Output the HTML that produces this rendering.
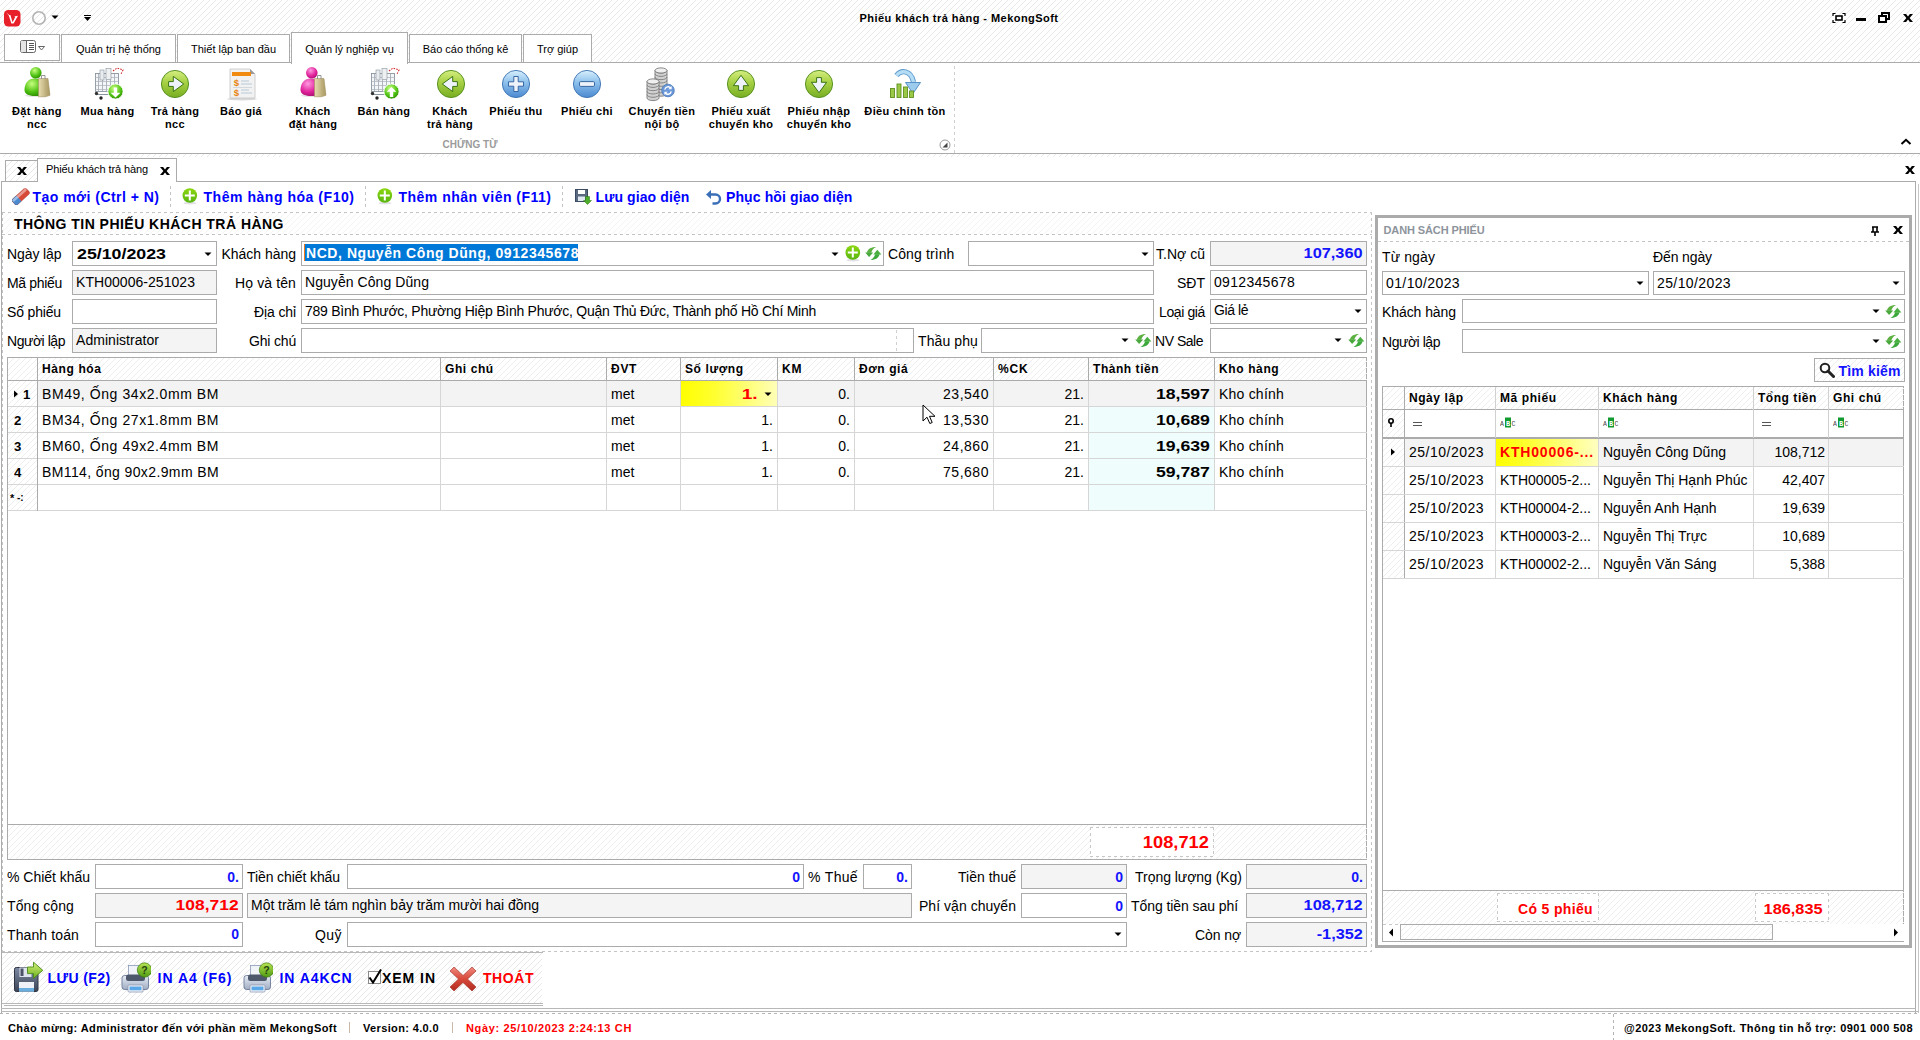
<!DOCTYPE html>
<html><head><meta charset="utf-8"><title>Phiếu khách trả hàng - MekongSoft</title>
<style>
html,body{margin:0;padding:0;width:1920px;height:1040px;overflow:hidden;background:#fff;font-family:"Liberation Sans",sans-serif}
body>div,body>svg{position:absolute}
</style></head><body>
<svg width="0" height="0" style="position:absolute"><defs>
<pattern id="hp" width="6" height="6" patternUnits="userSpaceOnUse"><rect x="5" y="0" width="1" height="1" fill="#e8e8e8"/><rect x="4" y="1" width="1" height="1" fill="#e8e8e8"/><rect x="3" y="2" width="1" height="1" fill="#e8e8e8"/><rect x="2" y="3" width="1" height="1" fill="#e8e8e8"/><rect x="1" y="4" width="1" height="1" fill="#e8e8e8"/><rect x="0" y="5" width="1" height="1" fill="#e8e8e8"/></pattern>
<pattern id="hp2" width="6" height="6" patternUnits="userSpaceOnUse"><rect x="5" y="0" width="1" height="1" fill="#eeeeee"/><rect x="4" y="1" width="1" height="1" fill="#eeeeee"/><rect x="3" y="2" width="1" height="1" fill="#eeeeee"/><rect x="2" y="3" width="1" height="1" fill="#eeeeee"/><rect x="1" y="4" width="1" height="1" fill="#eeeeee"/><rect x="0" y="5" width="1" height="1" fill="#eeeeee"/></pattern>
<pattern id="hp3" width="6" height="6" patternUnits="userSpaceOnUse"><rect x="5" y="0" width="1" height="1" fill="#f4f4f4"/><rect x="4" y="1" width="1" height="1" fill="#f4f4f4"/><rect x="3" y="2" width="1" height="1" fill="#f4f4f4"/><rect x="2" y="3" width="1" height="1" fill="#f4f4f4"/><rect x="1" y="4" width="1" height="1" fill="#f4f4f4"/><rect x="0" y="5" width="1" height="1" fill="#f4f4f4"/></pattern>
</defs></svg>
<svg style="left:0px;top:0px" width="1920" height="62"><rect width="1920" height="62" fill="url(#hp)"/></svg>
<svg style="left:4px;top:10px;" width="17" height="17" viewBox="0 0 17 17"><rect x="0" y="0" width="16.5" height="16.5" rx="4.2" fill="#e8202a"/><path d="M2.4 2.6L5.2 5.1L6.4 5L8.6 12.2L11.2 6.9L10.1 6.6L14 5.7L9.6 13.6H7.4L4.8 5.6Z" fill="#fff"/></svg>
<svg style="left:31px;top:10px;" width="16" height="16" viewBox="0 0 16 16"><circle cx="8" cy="8" r="6.2" fill="none" stroke="#b4b4b4" stroke-width="1.6"/></svg>
<svg style="left:51px;top:15px;" width="8" height="5" viewBox="0 0 8 5"><path d="M0.5 0.5h7l-3.5 3.5z" fill="#000"/></svg>
<svg style="left:83px;top:14px;" width="9" height="8" viewBox="0 0 9 8"><rect x="1" y="1" width="7" height="1" fill="#000"/><path d="M1 3h7l-3.5 4z" fill="#000"/></svg>
<div style="top:13px;font-size:11px;line-height:11px;font-weight:700;color:#000;white-space:nowrap;left:559px;width:800px;text-align:center;letter-spacing:0.455px;">Phiếu khách trả hàng - MekongSoft</div>
<svg style="left:1832px;top:12px;" width="14" height="12" viewBox="0 0 14 12"><path d="M1 4V1.5h2.5M10.5 1.5H13V4M13 8v2.5h-2.5M3.5 10.5H1V8" fill="none" stroke="#000" stroke-width="1.2"/><rect x="4" y="4" width="6" height="4" fill="none" stroke="#000" stroke-width="1.6"/></svg>
<div style="left:1856px;top:18px;width:10px;height:3px;background:#000"></div>
<svg style="left:1878px;top:12px;" width="12" height="11" viewBox="0 0 12 11"><rect x="4" y="1" width="7" height="6" fill="none" stroke="#000" stroke-width="2"/><rect x="1" y="4" width="7" height="6" fill="#fff" stroke="#000" stroke-width="2"/></svg>
<svg style="left:1903px;top:14px;" width="10" height="8" viewBox="0 0 10 8"><path d="M0 0H3.1L5 2.5L6.9 0H10L6.6 3.9L10 8H6.9L5 5.4L3.1 8H0L3.4 3.9Z" fill="#000"/></svg>
<div style="left:4px;top:34px;width:54px;height:25px;border:1px solid #ababab;background:#fff"></div>
<svg style="left:20px;top:40px;" width="26" height="14" viewBox="0 0 26 14"><rect x="0.5" y="0.5" width="15" height="12" rx="2" fill="#fff" stroke="#666"/><rect x="1" y="1" width="5" height="11" fill="#e4e4e4"/><path d="M6.5 0.5v12" stroke="#666"/><path d="M9 3.5h5M9 5.5h5M9 7.5h5M9 9.5h5" stroke="#555"/><path d="M18.5 6.5h6l-3 3.5z" fill="none" stroke="#666"/></svg>
<div style="left:0px;top:62px;width:1920px;height:1px;background:#ababab"></div>
<div style="left:61px;top:34px;width:113px;height:27px;border:1px solid #ababab;background:#fff"></div>
<div style="top:44px;font-size:11px;line-height:11px;font-weight:400;color:#000;white-space:nowrap;left:-281.5px;width:800px;text-align:center;">Quản trị hệ thống</div>
<div style="left:177px;top:34px;width:111px;height:27px;border:1px solid #ababab;background:#fff"></div>
<div style="top:44px;font-size:11px;line-height:11px;font-weight:400;color:#000;white-space:nowrap;left:-166.5px;width:800px;text-align:center;">Thiết lập ban đầu</div>
<div style="left:409px;top:34px;width:111px;height:27px;border:1px solid #ababab;background:#fff"></div>
<div style="top:44px;font-size:11px;line-height:11px;font-weight:400;color:#000;white-space:nowrap;left:65.5px;width:800px;text-align:center;">Báo cáo thống kê</div>
<div style="left:523px;top:34px;width:67px;height:27px;border:1px solid #ababab;background:#fff"></div>
<div style="top:44px;font-size:11px;line-height:11px;font-weight:400;color:#000;white-space:nowrap;left:157.5px;width:800px;text-align:center;">Trợ giúp</div>
<div style="left:291px;top:32px;width:115px;height:31px;border:1px solid #ababab;border-bottom:none;background:#fff"></div>
<div style="top:44px;font-size:11px;line-height:11px;font-weight:400;color:#000;white-space:nowrap;left:-50.5px;width:800px;text-align:center;">Quản lý nghiệp vụ</div>
<div style="left:0px;top:153px;width:1920px;height:1px;background:#ababab"></div>
<div style="top:106px;font-size:11px;line-height:11px;font-weight:700;color:#000;white-space:nowrap;left:-363px;width:800px;text-align:center;letter-spacing:0.35px;">Đặt hàng</div>
<div style="top:119px;font-size:11px;line-height:11px;font-weight:700;color:#000;white-space:nowrap;left:-363px;width:800px;text-align:center;letter-spacing:0.35px;">ncc</div>
<div style="top:106px;font-size:11px;line-height:11px;font-weight:700;color:#000;white-space:nowrap;left:-292.5px;width:800px;text-align:center;letter-spacing:0.35px;">Mua hàng</div>
<div style="top:106px;font-size:11px;line-height:11px;font-weight:700;color:#000;white-space:nowrap;left:-225px;width:800px;text-align:center;letter-spacing:0.35px;">Trả hàng</div>
<div style="top:119px;font-size:11px;line-height:11px;font-weight:700;color:#000;white-space:nowrap;left:-225px;width:800px;text-align:center;letter-spacing:0.35px;">ncc</div>
<div style="top:106px;font-size:11px;line-height:11px;font-weight:700;color:#000;white-space:nowrap;left:-159px;width:800px;text-align:center;letter-spacing:0.35px;">Báo giá</div>
<div style="top:106px;font-size:11px;line-height:11px;font-weight:700;color:#000;white-space:nowrap;left:-87px;width:800px;text-align:center;letter-spacing:0.35px;">Khách</div>
<div style="top:119px;font-size:11px;line-height:11px;font-weight:700;color:#000;white-space:nowrap;left:-87px;width:800px;text-align:center;letter-spacing:0.35px;">đặt hàng</div>
<div style="top:106px;font-size:11px;line-height:11px;font-weight:700;color:#000;white-space:nowrap;left:-16px;width:800px;text-align:center;letter-spacing:0.35px;">Bán hàng</div>
<div style="top:106px;font-size:11px;line-height:11px;font-weight:700;color:#000;white-space:nowrap;left:50px;width:800px;text-align:center;letter-spacing:0.35px;">Khách</div>
<div style="top:119px;font-size:11px;line-height:11px;font-weight:700;color:#000;white-space:nowrap;left:50px;width:800px;text-align:center;letter-spacing:0.35px;">trả hàng</div>
<div style="top:106px;font-size:11px;line-height:11px;font-weight:700;color:#000;white-space:nowrap;left:116px;width:800px;text-align:center;letter-spacing:0.35px;">Phiếu thu</div>
<div style="top:106px;font-size:11px;line-height:11px;font-weight:700;color:#000;white-space:nowrap;left:187px;width:800px;text-align:center;letter-spacing:0.35px;">Phiếu chi</div>
<div style="top:106px;font-size:11px;line-height:11px;font-weight:700;color:#000;white-space:nowrap;left:262px;width:800px;text-align:center;letter-spacing:0.35px;">Chuyển tiền</div>
<div style="top:119px;font-size:11px;line-height:11px;font-weight:700;color:#000;white-space:nowrap;left:262px;width:800px;text-align:center;letter-spacing:0.35px;">nội bộ</div>
<div style="top:106px;font-size:11px;line-height:11px;font-weight:700;color:#000;white-space:nowrap;left:341px;width:800px;text-align:center;letter-spacing:0.35px;">Phiếu xuất</div>
<div style="top:119px;font-size:11px;line-height:11px;font-weight:700;color:#000;white-space:nowrap;left:341px;width:800px;text-align:center;letter-spacing:0.35px;">chuyển kho</div>
<div style="top:106px;font-size:11px;line-height:11px;font-weight:700;color:#000;white-space:nowrap;left:419px;width:800px;text-align:center;letter-spacing:0.35px;">Phiếu nhập</div>
<div style="top:119px;font-size:11px;line-height:11px;font-weight:700;color:#000;white-space:nowrap;left:419px;width:800px;text-align:center;letter-spacing:0.35px;">chuyển kho</div>
<div style="top:106px;font-size:11px;line-height:11px;font-weight:700;color:#000;white-space:nowrap;left:505px;width:800px;text-align:center;letter-spacing:0.35px;">Điều chỉnh tồn</div>
<div style="top:140px;font-size:10px;line-height:10px;font-weight:700;color:#9b9b9b;white-space:nowrap;left:70px;width:800px;text-align:center;">CHỨNG TỪ</div>
<div style="left:954px;top:66px;width:1px;height:87px;background:repeating-linear-gradient(180deg,#cfcfcf 0 3px,transparent 3px 6px)"></div>
<svg style="left:939px;top:139px;" width="12" height="12" viewBox="0 0 12 12"><circle cx="6" cy="6" r="5" fill="#fff" stroke="#9a9a9a"/><path d="M3.5 8.5h5v-5z" fill="#444"/></svg>
<svg style="left:1900px;top:138px;" width="12" height="8" viewBox="0 0 12 8"><path d="M1.5 6L6 1.8L10.5 6" fill="none" stroke="#000" stroke-width="2"/></svg>
<svg style="left:0;top:0;width:0;height:0"><defs>
<linearGradient id="gG" x1="0" y1="0" x2="0" y2="1"><stop offset="0" stop-color="#d4ee80"/><stop offset="0.45" stop-color="#a6d044"/><stop offset="1" stop-color="#78ae22"/></linearGradient>
<linearGradient id="gB" x1="0" y1="0" x2="0" y2="1"><stop offset="0" stop-color="#d8f0fc"/><stop offset="0.45" stop-color="#8cc0ec"/><stop offset="1" stop-color="#4a88d0"/></linearGradient>
<radialGradient id="gP" cx="0.4" cy="0.3" r="0.8"><stop offset="0" stop-color="#ff9ae0"/><stop offset="0.6" stop-color="#e0209a"/><stop offset="1" stop-color="#a0106a"/></radialGradient>
<radialGradient id="gL" cx="0.4" cy="0.3" r="0.8"><stop offset="0" stop-color="#c8ff80"/><stop offset="0.6" stop-color="#4cc010"/><stop offset="1" stop-color="#2a8000"/></radialGradient>
<linearGradient id="gBag" x1="0" y1="0" x2="1" y2="0"><stop offset="0" stop-color="#e8dcb0"/><stop offset="1" stop-color="#a89860"/></linearGradient>
</defs></svg>
<svg style="left:22px;top:66px;" width="30" height="32" viewBox="0 0 30 32"><ellipse cx="14" cy="29.5" rx="11" ry="1.6" fill="#000" opacity="0.10"/><path d="M2.5 24c0-7 4-11.5 10-11.5s8.5 3 8.5 9v7.5c-2 0.6-5 1-8.5 1c-6 0-10-2.2-10-6z" fill="url(#gL)"/><circle cx="13.8" cy="6.8" r="5.8" fill="url(#gL)"/><path d="M16.5 12.5h9.5l2 16.8l-4.5 1.5h-7z" fill="url(#gBag)" stroke="#9a8a58" stroke-width="0.5"/><path d="M24 12.5v16.5" stroke="#b8a878" stroke-width="0.6"/><path d="M19.5 13v-3.5h3.5v3.5" fill="none" stroke="#8a8a8a" stroke-width="0.9"/></svg>
<svg style="left:94px;top:67px;" width="30" height="33" viewBox="0 0 30 33"><rect x="1.5" y="6.5" width="23" height="18" fill="#f4f6f8" stroke="#8a949e" stroke-width="0.9"/><path d="M4.5 7v17" stroke="#9aa4ae" stroke-width="0.8"/><path d="M8.5 7v17" stroke="#9aa4ae" stroke-width="0.8"/><path d="M12.5 7v17" stroke="#9aa4ae" stroke-width="0.8"/><path d="M16.5 7v17" stroke="#9aa4ae" stroke-width="0.8"/><path d="M20.5 7v17" stroke="#9aa4ae" stroke-width="0.8"/><path d="M1.5 10.5h23" stroke="#aab2ba" stroke-width="0.7"/><path d="M1.5 14.5h23" stroke="#aab2ba" stroke-width="0.7"/><path d="M1.5 18.5h23" stroke="#aab2ba" stroke-width="0.7"/><path d="M1.5 22.5h23" stroke="#aab2ba" stroke-width="0.7"/><rect x="6" y="3" width="4" height="10" fill="#e8ecef" stroke="#8a949e" stroke-width="0.6"/><rect x="12" y="1.5" width="5" height="11" fill="#eef0f2" stroke="#8a949e" stroke-width="0.6"/><path d="M19 4l4-3l6 2l-2 4" fill="none" stroke="#d02828" stroke-width="1.1" stroke-dasharray="1.6 1.2"/><path d="M2 27.5h16" stroke="#8a949e" stroke-width="1"/><circle cx="2.5" cy="26.5" r="1.7" fill="#333"/><circle cx="7" cy="31" r="1.7" fill="#222"/><circle cx="21.5" cy="24.5" r="7.6" fill="url(#gL)" stroke="#fff" stroke-width="0.9"/><path d="M19.8 20.5v5.2h-3.2l4.9 4.8l4.9-4.8h-3.2v-5.2z" fill="#fff"/></svg>
<svg style="left:160px;top:69px;" width="30" height="30" viewBox="0 0 30 30"><circle cx="15" cy="15" r="13.6" fill="url(#gG)" stroke="#4e8a1a" stroke-width="0.9"/><path transform="rotate(0 15 15)" d="M8.6 12.6H13.3V7.4L23.7 15L13.3 22.6V17.4H8.6Z" fill="#eef2fa" stroke="#3a7412" stroke-width="1" stroke-linejoin="miter"/></svg>
<svg style="left:226px;top:67px;" width="33" height="34" viewBox="0 0 33 34"><ellipse cx="16" cy="32" rx="15" ry="1.4" fill="#000" opacity="0.15"/><path d="M4 2h20l5 5v24h-25z" fill="#f2f2f2" stroke="#c4c4c4" stroke-width="0.8"/><path d="M24 2v5h5z" fill="#9a9a9a"/><rect x="6" y="5" width="19" height="4" fill="#f08a10"/><text x="10.5" y="19" font-size="9.5" font-weight="700" font-family="Liberation Sans" text-anchor="middle" fill="#e8820e">$</text><text x="10.5" y="28.5" font-size="9.5" font-weight="700" font-family="Liberation Sans" text-anchor="middle" fill="#e8820e">$</text><path d="M15 14h8M15 17h11M15 23h8M15 26h11" stroke="#b8c8d8" stroke-width="1.2"/><path d="M7 20.5h19" stroke="#c8d0d8" stroke-width="0.8"/></svg>
<svg style="left:298px;top:66px;" width="30" height="32" viewBox="0 0 30 32"><ellipse cx="14" cy="29.5" rx="11" ry="1.6" fill="#000" opacity="0.10"/><path d="M2.5 24c0-7 4-11.5 10-11.5s8.5 3 8.5 9v7.5c-2 0.6-5 1-8.5 1c-6 0-10-2.2-10-6z" fill="url(#gP)"/><circle cx="13.8" cy="6.8" r="5.8" fill="url(#gP)"/><path d="M16.5 12.5h9.5l2 16.8l-4.5 1.5h-7z" fill="url(#gBag)" stroke="#9a8a58" stroke-width="0.5"/><path d="M24 12.5v16.5" stroke="#b8a878" stroke-width="0.6"/><path d="M19.5 13v-3.5h3.5v3.5" fill="none" stroke="#8a8a8a" stroke-width="0.9"/></svg>
<svg style="left:370px;top:67px;" width="30" height="33" viewBox="0 0 30 33"><rect x="1.5" y="6.5" width="23" height="18" fill="#f4f6f8" stroke="#8a949e" stroke-width="0.9"/><path d="M4.5 7v17" stroke="#9aa4ae" stroke-width="0.8"/><path d="M8.5 7v17" stroke="#9aa4ae" stroke-width="0.8"/><path d="M12.5 7v17" stroke="#9aa4ae" stroke-width="0.8"/><path d="M16.5 7v17" stroke="#9aa4ae" stroke-width="0.8"/><path d="M20.5 7v17" stroke="#9aa4ae" stroke-width="0.8"/><path d="M1.5 10.5h23" stroke="#aab2ba" stroke-width="0.7"/><path d="M1.5 14.5h23" stroke="#aab2ba" stroke-width="0.7"/><path d="M1.5 18.5h23" stroke="#aab2ba" stroke-width="0.7"/><path d="M1.5 22.5h23" stroke="#aab2ba" stroke-width="0.7"/><rect x="6" y="3" width="4" height="10" fill="#e8ecef" stroke="#8a949e" stroke-width="0.6"/><rect x="12" y="1.5" width="5" height="11" fill="#eef0f2" stroke="#8a949e" stroke-width="0.6"/><path d="M19 4l4-3l6 2l-2 4" fill="none" stroke="#d02828" stroke-width="1.1" stroke-dasharray="1.6 1.2"/><path d="M2 27.5h16" stroke="#8a949e" stroke-width="1"/><circle cx="2.5" cy="26.5" r="1.7" fill="#333"/><circle cx="7" cy="31" r="1.7" fill="#222"/><circle cx="21.5" cy="24.5" r="7.6" fill="url(#gL)" stroke="#fff" stroke-width="0.9"/><path d="M19.8 30v-5.2h-3.2l4.9-4.8l4.9 4.8h-3.2v5.2z" fill="#fff"/></svg>
<svg style="left:436px;top:69px;" width="30" height="30" viewBox="0 0 30 30"><circle cx="15" cy="15" r="13.6" fill="url(#gG)" stroke="#4e8a1a" stroke-width="0.9"/><path transform="rotate(180 15 15)" d="M8.6 12.6H13.3V7.4L23.7 15L13.3 22.6V17.4H8.6Z" fill="#eef2fa" stroke="#3a7412" stroke-width="1" stroke-linejoin="miter"/></svg>
<svg style="left:501px;top:69px;" width="30" height="30" viewBox="0 0 30 30"><circle cx="15" cy="15" r="13.6" fill="url(#gB)" stroke="#3a70b0" stroke-width="0.9"/><path d="M12.8 7.5h4.4v5.3h5.3v4.4h-5.3v5.3h-4.4v-5.3h-5.3v-4.4h5.3z" fill="#eef2fa" stroke="#2a5a98" stroke-width="0.9"/></svg>
<svg style="left:572px;top:69px;" width="30" height="30" viewBox="0 0 30 30"><circle cx="15" cy="15" r="13.6" fill="url(#gB)" stroke="#3a70b0" stroke-width="0.9"/><rect x="7.5" y="12.6" width="15" height="4.8" rx="1.2" fill="#eef2fa" stroke="#2a5a98" stroke-width="0.9"/></svg>
<svg style="left:645px;top:66px;" width="34" height="36" viewBox="0 0 34 36"><rect x="10" y="4.5" width="12" height="23.099999999999998" fill="#d8d8d8"/><path d="M10 27.599999999999998a6 2.6 0 0 0 12 0" fill="#d0d0d0" stroke="#7a7a7a" stroke-width="0.9"/><path d="M10 24.299999999999997a6 2.6 0 0 0 12 0" fill="#d0d0d0" stroke="#7a7a7a" stroke-width="0.9"/><path d="M10 21.0a6 2.6 0 0 0 12 0" fill="#d0d0d0" stroke="#7a7a7a" stroke-width="0.9"/><path d="M10 17.7a6 2.6 0 0 0 12 0" fill="#d0d0d0" stroke="#7a7a7a" stroke-width="0.9"/><path d="M10 14.399999999999999a6 2.6 0 0 0 12 0" fill="#d0d0d0" stroke="#7a7a7a" stroke-width="0.9"/><path d="M10 11.099999999999998a6 2.6 0 0 0 12 0" fill="#d0d0d0" stroke="#7a7a7a" stroke-width="0.9"/><path d="M10 7.800000000000001a6 2.6 0 0 0 12 0" fill="#d0d0d0" stroke="#7a7a7a" stroke-width="0.9"/><path d="M10 4.5a6 2.6 0 0 0 12 0" fill="#d0d0d0" stroke="#7a7a7a" stroke-width="0.9"/><path d="M10 4.5v23.099999999999998M22 4.5v23.099999999999998" stroke="#7a7a7a" stroke-width="0.9"/><ellipse cx="16" cy="4.5" rx="6" ry="2.6" fill="#efefef" stroke="#7a7a7a" stroke-width="0.9"/><rect x="2" y="15.5" width="12" height="16.5" fill="#d8d8d8"/><path d="M2 32.0a6 2.6 0 0 0 12 0" fill="#d0d0d0" stroke="#7a7a7a" stroke-width="0.9"/><path d="M2 28.7a6 2.6 0 0 0 12 0" fill="#d0d0d0" stroke="#7a7a7a" stroke-width="0.9"/><path d="M2 25.4a6 2.6 0 0 0 12 0" fill="#d0d0d0" stroke="#7a7a7a" stroke-width="0.9"/><path d="M2 22.1a6 2.6 0 0 0 12 0" fill="#d0d0d0" stroke="#7a7a7a" stroke-width="0.9"/><path d="M2 18.8a6 2.6 0 0 0 12 0" fill="#d0d0d0" stroke="#7a7a7a" stroke-width="0.9"/><path d="M2 15.5a6 2.6 0 0 0 12 0" fill="#d0d0d0" stroke="#7a7a7a" stroke-width="0.9"/><path d="M2 15.5v16.5M14 15.5v16.5" stroke="#7a7a7a" stroke-width="0.9"/><ellipse cx="8" cy="15.5" rx="6" ry="2.6" fill="#efefef" stroke="#7a7a7a" stroke-width="0.9"/><circle cx="23" cy="24.5" r="6.3" fill="#6a98d8" stroke="#4a78b8" stroke-width="0.8"/><path d="M19.8 23.6a3.4 3.4 0 0 1 6-1.6M26.2 25.4a3.4 3.4 0 0 1-6 1.6" fill="none" stroke="#fff" stroke-width="1.4"/><path d="M26.6 20v3.2h-3.2z" fill="#fff"/><path d="M19.4 29v-3.2h3.2z" fill="#fff"/></svg>
<svg style="left:726px;top:69px;" width="30" height="30" viewBox="0 0 30 30"><circle cx="15" cy="15" r="13.6" fill="url(#gG)" stroke="#4e8a1a" stroke-width="0.9"/><path transform="rotate(-90 15 15)" d="M8.6 12.6H13.3V7.4L23.7 15L13.3 22.6V17.4H8.6Z" fill="#eef2fa" stroke="#3a7412" stroke-width="1" stroke-linejoin="miter"/></svg>
<svg style="left:804px;top:69px;" width="30" height="30" viewBox="0 0 30 30"><circle cx="15" cy="15" r="13.6" fill="url(#gG)" stroke="#4e8a1a" stroke-width="0.9"/><path transform="rotate(90 15 15)" d="M8.6 12.6H13.3V7.4L23.7 15L13.3 22.6V17.4H8.6Z" fill="#eef2fa" stroke="#3a7412" stroke-width="1" stroke-linejoin="miter"/></svg>
<svg style="left:888px;top:69px;" width="34" height="31" viewBox="0 0 34 31"><path d="M8.5 6.5C13 0.5 23 1 25.5 13" fill="none" stroke="#5a98cc" stroke-width="5.2"/><path d="M8.5 6.5C13 0.5 23 1 25.5 13" fill="none" stroke="#b4dcf4" stroke-width="3.4"/><path d="M17.5 13.5H32.5L25 24.5Z" fill="#9ccbee" stroke="#4a88c0" stroke-width="0.9" stroke-linejoin="round"/><rect x="2.5" y="19.5" width="4" height="9" fill="#9cc848" stroke="#5e9020" stroke-width="0.9"/><rect x="9" y="15" width="4" height="13.5" fill="#9cc848" stroke="#5e9020" stroke-width="0.9"/><rect x="15.5" y="18" width="4" height="10.5" fill="#9cc848" stroke="#5e9020" stroke-width="0.9"/><rect x="21.5" y="22" width="4" height="6.5" fill="#9cc848" stroke="#5e9020" stroke-width="0.9"/></svg>
<svg style="left:0px;top:154px" width="1920" height="3"><rect width="1920" height="3" fill="url(#hp)"/></svg>
<div style="left:5px;top:160px;width:31px;height:20px;border:1px solid #ababab;background:transparent"></div>
<svg style="left:6px;top:161px" width="31" height="20"><rect width="31" height="20" fill="url(#hp)"/></svg>
<svg style="left:17px;top:167px;" width="10" height="8" viewBox="0 0 10 8"><path d="M0 0H3.1L5 2.5L6.9 0H10L6.6 3.9L10 8H6.9L5 5.4L3.1 8H0L3.4 3.9Z" fill="#000"/></svg>
<div style="left:37px;top:158px;width:138px;height:23px;border:1px solid #ababab;border-bottom:none;background:#fff"></div>
<div style="top:164px;font-size:11px;line-height:11px;font-weight:400;color:#000;white-space:nowrap;left:46px;letter-spacing:-0.098px;">Phiếu khách trả hàng</div>
<svg style="left:160px;top:167px;" width="10" height="8" viewBox="0 0 10 8"><path d="M0 0H3.1L5 2.5L6.9 0H10L6.6 3.9L10 8H6.9L5 5.4L3.1 8H0L3.4 3.9Z" fill="#000"/></svg>
<svg style="left:1905px;top:166px;" width="10" height="8" viewBox="0 0 10 8"><path d="M0 0H3.1L5 2.5L6.9 0H10L6.6 3.9L10 8H6.9L5 5.4L3.1 8H0L3.4 3.9Z" fill="#000"/></svg>
<div style="left:1px;top:181px;width:37px;height:1px;background:#ababab"></div>
<div style="left:176px;top:181px;width:1740px;height:1px;background:#ababab"></div>
<div style="left:1px;top:181px;width:1px;height:832px;background:#ababab"></div>
<div style="left:1915px;top:181px;width:1px;height:832px;background:#ababab"></div>
<div style="left:1918px;top:184px;width:1px;height:829px;background:#c8c8c8"></div>
<div style="left:1px;top:1008px;width:1915px;height:1px;background:#b8b8b8"></div>
<div style="left:1px;top:1011px;width:1918px;height:1px;background:#b8b8b8"></div>
<div style="left:0px;top:1013px;width:1920px;height:1px;background:repeating-linear-gradient(90deg,#b4b4b4 0 3px,transparent 3px 6px)"></div>
<div style="top:189.5px;font-size:14px;line-height:14px;font-weight:700;color:#0000ff;white-space:nowrap;left:32.5px;letter-spacing:0.474px;">Tạo mới (Ctrl + N)</div>
<div style="left:170px;top:186px;width:1px;height:23px;background:repeating-linear-gradient(180deg,#c4c4c4 0 3px,transparent 3px 6px)"></div>
<div style="top:189.5px;font-size:14px;line-height:14px;font-weight:700;color:#0000ff;white-space:nowrap;left:203.5px;letter-spacing:0.537px;">Thêm hàng hóa (F10)</div>
<div style="left:365px;top:186px;width:1px;height:23px;background:repeating-linear-gradient(180deg,#c4c4c4 0 3px,transparent 3px 6px)"></div>
<div style="top:189.5px;font-size:14px;line-height:14px;font-weight:700;color:#0000ff;white-space:nowrap;left:398.5px;letter-spacing:0.493px;">Thêm nhân viên (F11)</div>
<div style="left:562px;top:186px;width:1px;height:23px;background:repeating-linear-gradient(180deg,#c4c4c4 0 3px,transparent 3px 6px)"></div>
<div style="top:189.5px;font-size:14px;line-height:14px;font-weight:700;color:#0000ff;white-space:nowrap;left:595.5px;letter-spacing:0.108px;">Lưu giao diện</div>
<div style="top:189.5px;font-size:14px;line-height:14px;font-weight:700;color:#0000ff;white-space:nowrap;left:726px;letter-spacing:0.114px;">Phục hồi giao diện</div>
<svg style="left:3px;top:213px" width="1368" height="21"><rect width="1368" height="21" fill="url(#hp3)"/></svg>
<div style="left:2px;top:212px;width:1370px;height:1px;background:repeating-linear-gradient(90deg,#c4c4c4 0 3px,transparent 3px 6px)"></div>
<div style="left:2px;top:234px;width:1370px;height:1px;background:repeating-linear-gradient(90deg,#c4c4c4 0 3px,transparent 3px 6px)"></div>
<div style="left:1371px;top:212px;width:1px;height:740px;background:repeating-linear-gradient(180deg,#c4c4c4 0 3px,transparent 3px 6px)"></div>
<div style="left:2px;top:212px;width:1px;height:740px;background:repeating-linear-gradient(180deg,#c4c4c4 0 3px,transparent 3px 6px)"></div>
<div style="top:217px;font-size:14px;line-height:14px;font-weight:700;color:#000;white-space:nowrap;left:14px;letter-spacing:0.470px;">THÔNG TIN PHIẾU KHÁCH TRẢ HÀNG</div>
<div style="top:247px;font-size:14px;line-height:14px;font-weight:400;color:#000;white-space:nowrap;left:7px;letter-spacing:-0.096px;">Ngày lập</div>
<div style="left:72px;top:241px;width:143px;height:23px;border:1px solid #ababab;background:#fff"></div>
<div style="top:247px;font-size:14px;line-height:14px;font-weight:700;color:#000;white-space:nowrap;left:76.5px;transform:scaleX(1.2700);transform-origin:left center;">25/10/2023</div>
<svg style="left:204px;top:252px;" width="8" height="5" viewBox="0 0 8 5"><path d="M0.5 0.5h7l-3.5 3.5z" fill="#000"/></svg>
<div style="top:247px;font-size:14px;line-height:14px;font-weight:400;color:#000;white-space:nowrap;right:1624px;letter-spacing:-0.023px;">Khách hàng</div>
<div style="left:301px;top:241px;width:581px;height:23px;border:1px solid #ababab;background:#fff"></div>
<div style="left:305px;top:244px;width:273px;height:17px;background:#0078d7"></div>
<div style="left:304px;top:244px;width:1px;height:17px;background:#f07c20"></div>
<div style="top:246px;font-size:14px;line-height:14px;font-weight:700;color:#fff;white-space:nowrap;left:306px;letter-spacing:0.563px;">NCD, Nguyễn Công Dũng, 0912345678</div>
<svg style="left:831px;top:252px;" width="8" height="5" viewBox="0 0 8 5"><path d="M0.5 0.5h7l-3.5 3.5z" fill="#000"/></svg>
<div style="top:247px;font-size:14px;line-height:14px;font-weight:400;color:#000;white-space:nowrap;left:888px;letter-spacing:0.113px;">Công trình</div>
<div style="left:968px;top:241px;width:184px;height:23px;border:1px solid #ababab;background:#fff"></div>
<svg style="left:1141px;top:252px;" width="8" height="5" viewBox="0 0 8 5"><path d="M0.5 0.5h7l-3.5 3.5z" fill="#000"/></svg>
<div style="top:247px;font-size:14px;line-height:14px;font-weight:400;color:#000;white-space:nowrap;right:715px;letter-spacing:0.020px;">T.Nợ cũ</div>
<div style="left:1210px;top:241px;width:155px;height:23px;border:1px solid #ababab;background:#f4f4f4"></div>
<div style="top:246px;font-size:14px;line-height:14px;font-weight:700;color:#1414ff;white-space:nowrap;right:557px;transform:scaleX(1.1658);transform-origin:right center;">107,360</div>
<div style="top:276px;font-size:14px;line-height:14px;font-weight:400;color:#000;white-space:nowrap;left:7px;letter-spacing:-0.324px;">Mã phiếu</div>
<div style="left:72px;top:270px;width:143px;height:23px;border:1px solid #ababab;background:#f4f4f4"></div>
<div style="top:275px;font-size:14px;line-height:14px;font-weight:400;color:#000;white-space:nowrap;left:76px;letter-spacing:0.046px;">KTH00006-251023</div>
<div style="top:276px;font-size:14px;line-height:14px;font-weight:400;color:#000;white-space:nowrap;right:1624px;letter-spacing:0.118px;">Họ và tên</div>
<div style="left:301px;top:270px;width:851px;height:23px;border:1px solid #ababab;background:#fff"></div>
<div style="top:275px;font-size:14px;line-height:14px;font-weight:400;color:#000;white-space:nowrap;left:305px;letter-spacing:0.063px;">Nguyễn Công Dũng</div>
<div style="top:276px;font-size:14px;line-height:14px;font-weight:400;color:#000;white-space:nowrap;right:715px;letter-spacing:0.000px;">SĐT</div>
<div style="left:1210px;top:270px;width:155px;height:23px;border:1px solid #ababab;background:#fff"></div>
<div style="top:275px;font-size:14px;line-height:14px;font-weight:400;color:#000;white-space:nowrap;left:1214px;letter-spacing:0.312px;">0912345678</div>
<div style="top:305px;font-size:14px;line-height:14px;font-weight:400;color:#000;white-space:nowrap;left:7px;letter-spacing:-0.160px;">Số phiếu</div>
<div style="left:72px;top:299px;width:143px;height:23px;border:1px solid #ababab;background:#fff"></div>
<div style="top:305px;font-size:14px;line-height:14px;font-weight:400;color:#000;white-space:nowrap;right:1624px;letter-spacing:-0.114px;">Địa chỉ</div>
<div style="left:301px;top:299px;width:851px;height:23px;border:1px solid #ababab;background:#fff"></div>
<div style="top:304px;font-size:14px;line-height:14px;font-weight:400;color:#000;white-space:nowrap;left:305px;letter-spacing:-0.252px;">789 Bình Phước, Phường Hiệp Bình Phước, Quận Thủ Đức, Thành phố Hồ Chí Minh</div>
<div style="top:305px;font-size:14px;line-height:14px;font-weight:400;color:#000;white-space:nowrap;right:715px;letter-spacing:-0.381px;">Loại giá</div>
<div style="left:1210px;top:299px;width:155px;height:23px;border:1px solid #ababab;background:#fff"></div>
<div style="top:303px;font-size:14px;line-height:14px;font-weight:400;color:#000;white-space:nowrap;left:1214px;letter-spacing:-0.430px;">Giá lẻ</div>
<svg style="left:1354px;top:309px;" width="8" height="5" viewBox="0 0 8 5"><path d="M0.5 0.5h7l-3.5 3.5z" fill="#000"/></svg>
<div style="top:334px;font-size:14px;line-height:14px;font-weight:400;color:#000;white-space:nowrap;left:7px;letter-spacing:-0.460px;">Người lập</div>
<div style="left:72px;top:328px;width:143px;height:23px;border:1px solid #ababab;background:#f4f4f4"></div>
<div style="top:333px;font-size:14px;line-height:14px;font-weight:400;color:#000;white-space:nowrap;left:76px;letter-spacing:0.041px;">Administrator</div>
<div style="top:334px;font-size:14px;line-height:14px;font-weight:400;color:#000;white-space:nowrap;right:1624px;letter-spacing:-0.179px;">Ghi chú</div>
<div style="left:301px;top:328px;width:611px;height:23px;border:1px solid #ababab;background:#fff"></div>
<div style="left:896px;top:330px;width:1px;height:22px;background:repeating-linear-gradient(180deg,#d0d0d0 0 3px,transparent 3px 6px)"></div>
<div style="top:334px;font-size:14px;line-height:14px;font-weight:400;color:#000;white-space:nowrap;left:918px;letter-spacing:0.104px;">Thầu phụ</div>
<div style="left:981px;top:328px;width:171px;height:23px;border:1px solid #ababab;background:#fff"></div>
<svg style="left:1121px;top:338px;" width="8" height="5" viewBox="0 0 8 5"><path d="M0.5 0.5h7l-3.5 3.5z" fill="#000"/></svg>
<div style="top:334px;font-size:14px;line-height:14px;font-weight:400;color:#000;white-space:nowrap;right:717px;letter-spacing:-0.480px;">NV Sale</div>
<div style="left:1210px;top:328px;width:155px;height:23px;border:1px solid #ababab;background:#fff"></div>
<svg style="left:1334px;top:338px;" width="8" height="5" viewBox="0 0 8 5"><path d="M0.5 0.5h7l-3.5 3.5z" fill="#000"/></svg>
<div style="left:7px;top:357px;width:1358px;height:501px;border:1px solid #ababab;background:#fff"></div>
<svg style="left:8px;top:358px" width="1359" height="22"><rect width="1359" height="22" fill="url(#hp2)"/></svg>
<svg style="left:8px;top:381px" width="29" height="129"><rect width="29" height="129" fill="url(#hp2)"/></svg>
<div style="left:1089px;top:407px;width:125px;height:103px;background:#effdfd"></div>
<div style="left:38px;top:381px;width:1328px;height:25px;background:#f3f3f3"></div>
<div style="left:681px;top:381px;width:96px;height:25px;background:linear-gradient(90deg,#ffff00 0%,#ffff30 35%,#ffffb8 100%)"></div>
<div style="left:7px;top:380px;width:1360px;height:1px;background:#ababab"></div>
<div style="left:8px;top:406px;width:1359px;height:1px;background:#d6d6d6"></div>
<div style="left:8px;top:432px;width:1359px;height:1px;background:#d6d6d6"></div>
<div style="left:8px;top:458px;width:1359px;height:1px;background:#d6d6d6"></div>
<div style="left:8px;top:484px;width:1359px;height:1px;background:#d6d6d6"></div>
<div style="left:8px;top:510px;width:1359px;height:1px;background:#d6d6d6"></div>
<div style="left:37px;top:358px;width:1px;height:153px;background:#ababab"></div>
<div style="left:440px;top:358px;width:1px;height:22px;background:#ababab"></div>
<div style="left:440px;top:381px;width:1px;height:130px;background:#d6d6d6"></div>
<div style="left:606px;top:358px;width:1px;height:22px;background:#ababab"></div>
<div style="left:606px;top:381px;width:1px;height:130px;background:#d6d6d6"></div>
<div style="left:680px;top:358px;width:1px;height:22px;background:#ababab"></div>
<div style="left:680px;top:381px;width:1px;height:130px;background:#d6d6d6"></div>
<div style="left:777px;top:358px;width:1px;height:22px;background:#ababab"></div>
<div style="left:777px;top:381px;width:1px;height:130px;background:#d6d6d6"></div>
<div style="left:854px;top:358px;width:1px;height:22px;background:#ababab"></div>
<div style="left:854px;top:381px;width:1px;height:130px;background:#d6d6d6"></div>
<div style="left:993px;top:358px;width:1px;height:22px;background:#ababab"></div>
<div style="left:993px;top:381px;width:1px;height:130px;background:#d6d6d6"></div>
<div style="left:1088px;top:358px;width:1px;height:22px;background:#ababab"></div>
<div style="left:1088px;top:381px;width:1px;height:130px;background:#d6d6d6"></div>
<div style="left:1214px;top:358px;width:1px;height:22px;background:#ababab"></div>
<div style="left:1214px;top:381px;width:1px;height:130px;background:#d6d6d6"></div>
<div style="left:8px;top:824px;width:1359px;height:1px;background:#ababab"></div>
<svg style="left:8px;top:825px" width="1359" height="34"><rect width="1359" height="34" fill="url(#hp2)"/></svg>
<div style="left:1090px;top:827px;width:123px;height:29px;background:#fff"></div>
<div style="left:1090px;top:827px;width:124px;height:1px;background:repeating-linear-gradient(90deg,#c8c8c8 0 3px,transparent 3px 6px)"></div>
<div style="left:1090px;top:856px;width:124px;height:1px;background:repeating-linear-gradient(90deg,#c8c8c8 0 3px,transparent 3px 6px)"></div>
<div style="left:1090px;top:827px;width:1px;height:30px;background:repeating-linear-gradient(180deg,#c8c8c8 0 3px,transparent 3px 6px)"></div>
<div style="left:1213px;top:827px;width:1px;height:30px;background:repeating-linear-gradient(180deg,#c8c8c8 0 3px,transparent 3px 6px)"></div>
<div style="top:835px;font-size:16px;line-height:16px;font-weight:700;color:#ff0000;white-space:nowrap;right:711px;transform:scaleX(1.1410);transform-origin:right center;">108,712</div>
<div style="top:363px;font-size:12px;line-height:12px;font-weight:700;color:#000;white-space:nowrap;left:42px;letter-spacing:0.615px;">Hàng hóa</div>
<div style="top:363px;font-size:12px;line-height:12px;font-weight:700;color:#000;white-space:nowrap;left:445px;letter-spacing:0.574px;">Ghi chú</div>
<div style="top:363px;font-size:12px;line-height:12px;font-weight:700;color:#000;white-space:nowrap;left:611px;letter-spacing:0.720px;">ĐVT</div>
<div style="top:363px;font-size:12px;line-height:12px;font-weight:700;color:#000;white-space:nowrap;left:685px;letter-spacing:0.606px;">Số lượng</div>
<div style="top:363px;font-size:12px;line-height:12px;font-weight:700;color:#000;white-space:nowrap;left:782px;letter-spacing:0.840px;">KM</div>
<div style="top:363px;font-size:12px;line-height:12px;font-weight:700;color:#000;white-space:nowrap;left:859px;letter-spacing:0.581px;">Đơn giá</div>
<div style="top:363px;font-size:12px;line-height:12px;font-weight:700;color:#000;white-space:nowrap;left:998px;letter-spacing:0.840px;">%CK</div>
<div style="top:363px;font-size:12px;line-height:12px;font-weight:700;color:#000;white-space:nowrap;left:1093px;letter-spacing:0.546px;">Thành tiền</div>
<div style="top:363px;font-size:12px;line-height:12px;font-weight:700;color:#000;white-space:nowrap;left:1219px;letter-spacing:0.622px;">Kho hàng</div>
<div style="top:389px;font-size:12px;line-height:12px;font-weight:700;color:#000;white-space:nowrap;left:23px;transform:scaleX(1.1000);transform-origin:left center;">1</div>
<div style="top:387px;font-size:14px;line-height:14px;font-weight:400;color:#000;white-space:nowrap;left:42px;letter-spacing:0.574px;">BM49, Ống 34x2.0mm BM</div>
<div style="top:387px;font-size:14px;line-height:14px;font-weight:400;color:#000;white-space:nowrap;left:611px;">met</div>
<div style="top:387px;font-size:14px;line-height:14px;font-weight:700;color:#ff0000;white-space:nowrap;right:1162px;transform:scaleX(1.3690);transform-origin:right center;">1.</div>
<svg style="left:764px;top:392px;" width="8" height="5" viewBox="0 0 8 5"><path d="M0.5 0.5h7l-3.5 3.5z" fill="#000"/></svg>
<div style="top:387px;font-size:14px;line-height:14px;font-weight:400;color:#000;white-space:nowrap;right:1070px;">0.</div>
<div style="top:387px;font-size:14px;line-height:14px;font-weight:400;color:#000;white-space:nowrap;right:931px;letter-spacing:0.529px;">23,540</div>
<div style="top:387px;font-size:14px;line-height:14px;font-weight:400;color:#000;white-space:nowrap;right:836px;">21.</div>
<div style="top:386px;font-size:15px;line-height:15px;font-weight:700;color:#000;white-space:nowrap;right:710px;transform:scaleX(1.1767);transform-origin:right center;">18,597</div>
<div style="top:387px;font-size:14px;line-height:14px;font-weight:400;color:#000;white-space:nowrap;left:1219px;letter-spacing:0.215px;">Kho chính</div>
<div style="top:415px;font-size:12px;line-height:12px;font-weight:700;color:#000;white-space:nowrap;left:14px;transform:scaleX(1.1000);transform-origin:left center;">2</div>
<div style="top:413px;font-size:14px;line-height:14px;font-weight:400;color:#000;white-space:nowrap;left:42px;letter-spacing:0.574px;">BM34, Ống 27x1.8mm BM</div>
<div style="top:413px;font-size:14px;line-height:14px;font-weight:400;color:#000;white-space:nowrap;left:611px;">met</div>
<div style="top:413px;font-size:14px;line-height:14px;font-weight:400;color:#000;white-space:nowrap;right:1147px;">1.</div>
<div style="top:413px;font-size:14px;line-height:14px;font-weight:400;color:#000;white-space:nowrap;right:1070px;">0.</div>
<div style="top:413px;font-size:14px;line-height:14px;font-weight:400;color:#000;white-space:nowrap;right:931px;letter-spacing:0.529px;">13,530</div>
<div style="top:413px;font-size:14px;line-height:14px;font-weight:400;color:#000;white-space:nowrap;right:836px;">21.</div>
<div style="top:412px;font-size:15px;line-height:15px;font-weight:700;color:#000;white-space:nowrap;right:710px;transform:scaleX(1.1767);transform-origin:right center;">10,689</div>
<div style="top:413px;font-size:14px;line-height:14px;font-weight:400;color:#000;white-space:nowrap;left:1219px;letter-spacing:0.215px;">Kho chính</div>
<div style="top:441px;font-size:12px;line-height:12px;font-weight:700;color:#000;white-space:nowrap;left:14px;transform:scaleX(1.1000);transform-origin:left center;">3</div>
<div style="top:439px;font-size:14px;line-height:14px;font-weight:400;color:#000;white-space:nowrap;left:42px;letter-spacing:0.574px;">BM60, Ống 49x2.4mm BM</div>
<div style="top:439px;font-size:14px;line-height:14px;font-weight:400;color:#000;white-space:nowrap;left:611px;">met</div>
<div style="top:439px;font-size:14px;line-height:14px;font-weight:400;color:#000;white-space:nowrap;right:1147px;">1.</div>
<div style="top:439px;font-size:14px;line-height:14px;font-weight:400;color:#000;white-space:nowrap;right:1070px;">0.</div>
<div style="top:439px;font-size:14px;line-height:14px;font-weight:400;color:#000;white-space:nowrap;right:931px;letter-spacing:0.529px;">24,860</div>
<div style="top:439px;font-size:14px;line-height:14px;font-weight:400;color:#000;white-space:nowrap;right:836px;">21.</div>
<div style="top:438px;font-size:15px;line-height:15px;font-weight:700;color:#000;white-space:nowrap;right:710px;transform:scaleX(1.1767);transform-origin:right center;">19,639</div>
<div style="top:439px;font-size:14px;line-height:14px;font-weight:400;color:#000;white-space:nowrap;left:1219px;letter-spacing:0.215px;">Kho chính</div>
<div style="top:467px;font-size:12px;line-height:12px;font-weight:700;color:#000;white-space:nowrap;left:14px;transform:scaleX(1.1000);transform-origin:left center;">4</div>
<div style="top:465px;font-size:14px;line-height:14px;font-weight:400;color:#000;white-space:nowrap;left:42px;letter-spacing:0.381px;">BM114, ống 90x2.9mm BM</div>
<div style="top:465px;font-size:14px;line-height:14px;font-weight:400;color:#000;white-space:nowrap;left:611px;">met</div>
<div style="top:465px;font-size:14px;line-height:14px;font-weight:400;color:#000;white-space:nowrap;right:1147px;">1.</div>
<div style="top:465px;font-size:14px;line-height:14px;font-weight:400;color:#000;white-space:nowrap;right:1070px;">0.</div>
<div style="top:465px;font-size:14px;line-height:14px;font-weight:400;color:#000;white-space:nowrap;right:931px;letter-spacing:0.529px;">75,680</div>
<div style="top:465px;font-size:14px;line-height:14px;font-weight:400;color:#000;white-space:nowrap;right:836px;">21.</div>
<div style="top:464px;font-size:15px;line-height:15px;font-weight:700;color:#000;white-space:nowrap;right:710px;transform:scaleX(1.1767);transform-origin:right center;">59,787</div>
<div style="top:465px;font-size:14px;line-height:14px;font-weight:400;color:#000;white-space:nowrap;left:1219px;letter-spacing:0.215px;">Kho chính</div>
<svg style="left:13px;top:389px;" width="6" height="10" viewBox="0 0 6 10"><path d="M1 1.5L5 5L1 8.5z" fill="#000"/></svg>
<div style="top:493px;font-size:11px;line-height:11px;font-weight:700;color:#000;white-space:nowrap;left:10px;">*</div>
<div style="top:493px;font-size:10px;line-height:10px;font-weight:700;color:#000;white-space:nowrap;left:17px;">-:</div>
<div style="top:870px;font-size:14px;line-height:14px;font-weight:400;color:#000;white-space:nowrap;left:7px;letter-spacing:-0.023px;">% Chiết khấu</div>
<div style="left:95px;top:864px;width:146px;height:23px;border:1px solid #ababab;background:#fff"></div>
<div style="top:870px;font-size:14px;line-height:14px;font-weight:700;color:#1414ff;white-space:nowrap;right:1681px;">0.</div>
<div style="top:870px;font-size:14px;line-height:14px;font-weight:400;color:#000;white-space:nowrap;left:247px;letter-spacing:-0.096px;">Tiền chiết khấu</div>
<div style="left:347px;top:864px;width:455px;height:23px;border:1px solid #ababab;background:#fff"></div>
<div style="top:870px;font-size:14px;line-height:14px;font-weight:700;color:#1414ff;white-space:nowrap;right:1120px;">0</div>
<div style="top:870px;font-size:14px;line-height:14px;font-weight:400;color:#000;white-space:nowrap;left:808px;letter-spacing:0.333px;">% Thuế</div>
<div style="left:863px;top:864px;width:47px;height:23px;border:1px solid #ababab;background:#fff"></div>
<div style="top:870px;font-size:14px;line-height:14px;font-weight:700;color:#1414ff;white-space:nowrap;right:1012px;">0.</div>
<div style="top:870px;font-size:14px;line-height:14px;font-weight:400;color:#000;white-space:nowrap;right:904px;letter-spacing:0.016px;">Tiền thuế</div>
<div style="left:1021px;top:864px;width:104px;height:23px;border:1px solid #ababab;background:#f4f4f4"></div>
<div style="top:870px;font-size:14px;line-height:14px;font-weight:700;color:#1414ff;white-space:nowrap;right:797px;">0</div>
<div style="top:870px;font-size:14px;line-height:14px;font-weight:400;color:#000;white-space:nowrap;left:1135px;letter-spacing:-0.032px;">Trọng lượng (Kg)</div>
<div style="left:1246px;top:864px;width:119px;height:23px;border:1px solid #ababab;background:#f4f4f4"></div>
<div style="top:870px;font-size:14px;line-height:14px;font-weight:700;color:#1414ff;white-space:nowrap;right:557px;">0.</div>
<div style="top:899px;font-size:14px;line-height:14px;font-weight:400;color:#000;white-space:nowrap;left:7px;letter-spacing:0.092px;">Tổng cộng</div>
<div style="left:95px;top:893px;width:146px;height:23px;border:1px solid #ababab;background:#f4f4f4"></div>
<div style="top:898px;font-size:14px;line-height:14px;font-weight:700;color:#ff0000;white-space:nowrap;right:1681px;transform:scaleX(1.2448);transform-origin:right center;">108,712</div>
<div style="left:247px;top:893px;width:663px;height:23px;border:1px solid #ababab;background:#f4f4f4"></div>
<div style="top:898px;font-size:14px;line-height:14px;font-weight:400;color:#000;white-space:nowrap;left:251px;letter-spacing:-0.031px;">Một trăm lẻ tám nghìn bảy trăm mười hai đồng</div>
<div style="top:899px;font-size:14px;line-height:14px;font-weight:400;color:#000;white-space:nowrap;right:904px;letter-spacing:0.035px;">Phí vận chuyển</div>
<div style="left:1021px;top:893px;width:104px;height:23px;border:1px solid #ababab;background:#fff"></div>
<div style="top:899px;font-size:14px;line-height:14px;font-weight:700;color:#1414ff;white-space:nowrap;right:797px;">0</div>
<div style="top:899px;font-size:14px;line-height:14px;font-weight:400;color:#000;white-space:nowrap;left:1131px;letter-spacing:-0.070px;">Tổng tiền sau phí</div>
<div style="left:1246px;top:893px;width:119px;height:23px;border:1px solid #ababab;background:#f4f4f4"></div>
<div style="top:898px;font-size:14px;line-height:14px;font-weight:700;color:#1414ff;white-space:nowrap;right:557px;transform:scaleX(1.1658);transform-origin:right center;">108,712</div>
<div style="top:928px;font-size:14px;line-height:14px;font-weight:400;color:#000;white-space:nowrap;left:7px;letter-spacing:0.116px;">Thanh toán</div>
<div style="left:95px;top:922px;width:146px;height:23px;border:1px solid #ababab;background:#fff"></div>
<div style="top:927px;font-size:14px;line-height:14px;font-weight:700;color:#1414ff;white-space:nowrap;right:1681px;">0</div>
<div style="top:928px;font-size:14px;line-height:14px;font-weight:400;color:#000;white-space:nowrap;right:1578px;letter-spacing:0.438px;">Quỹ</div>
<div style="left:347px;top:922px;width:778px;height:23px;border:1px solid #ababab;background:#fff"></div>
<svg style="left:1114px;top:932px;" width="8" height="5" viewBox="0 0 8 5"><path d="M0.5 0.5h7l-3.5 3.5z" fill="#000"/></svg>
<div style="top:928px;font-size:14px;line-height:14px;font-weight:400;color:#000;white-space:nowrap;right:679px;letter-spacing:-0.091px;">Còn nợ</div>
<div style="left:1246px;top:922px;width:119px;height:23px;border:1px solid #ababab;background:#f4f4f4"></div>
<div style="top:927px;font-size:14px;line-height:14px;font-weight:700;color:#1414ff;white-space:nowrap;right:557px;transform:scaleX(1.1586);transform-origin:right center;">-1,352</div>
<div style="left:2px;top:951px;width:1370px;height:1px;background:repeating-linear-gradient(90deg,#c4c4c4 0 3px,transparent 3px 6px)"></div>
<svg style="left:2px;top:953px" width="540" height="50"><rect width="540" height="50" fill="url(#hp)"/></svg>
<div style="left:2px;top:952px;width:541px;height:1px;background:#b8b8b8"></div>
<div style="left:2px;top:1003px;width:541px;height:1px;background:#b8b8b8"></div>
<div style="left:4px;top:1005px;width:539px;height:1px;background:#b8b8b8"></div>
<div style="top:971px;font-size:14px;line-height:14px;font-weight:700;color:#0000ff;white-space:nowrap;left:47.5px;letter-spacing:0.396px;">LƯU (F2)</div>
<div style="top:971px;font-size:14px;line-height:14px;font-weight:700;color:#0000ff;white-space:nowrap;left:157.5px;letter-spacing:1.017px;">IN A4 (F6)</div>
<div style="top:971px;font-size:14px;line-height:14px;font-weight:700;color:#0000ff;white-space:nowrap;left:279.5px;letter-spacing:0.924px;">IN A4KCN</div>
<div style="left:368px;top:971px;width:11px;height:11px;border:1px solid #8c8c8c;background:#fff"></div>
<svg style="left:368px;top:968px;" width="14" height="16" viewBox="0 0 14 16"><path d="M1.5 9.5L5 14.5L13 1.5" fill="none" stroke="#000" stroke-width="2"/></svg>
<div style="top:971px;font-size:14px;line-height:14px;font-weight:700;color:#000;white-space:nowrap;left:382px;letter-spacing:0.961px;">XEM IN</div>
<div style="top:971px;font-size:14px;line-height:14px;font-weight:700;color:#ff0000;white-space:nowrap;left:483px;letter-spacing:0.556px;">THOÁT</div>
<svg style="left:13px;top:961px;" width="31" height="32" viewBox="0 0 31 32"><defs><linearGradient id="gFl" x1="0" y1="0" x2="0" y2="1"><stop offset="0" stop-color="#7c8aa2"/><stop offset="1" stop-color="#3c4456"/></linearGradient><linearGradient id="gAr" x1="0" y1="0" x2="0" y2="1"><stop offset="0" stop-color="#d4f47c"/><stop offset="1" stop-color="#6cac1c"/></linearGradient><linearGradient id="gPr" x1="0" y1="0" x2="0" y2="1"><stop offset="0" stop-color="#e8eef6"/><stop offset="1" stop-color="#a0acc2"/></linearGradient><linearGradient id="gQ" x1="0" y1="0" x2="0" y2="1"><stop offset="0" stop-color="#b8e454"/><stop offset="1" stop-color="#4e9a12"/></linearGradient></defs><rect x="1.5" y="6.5" width="23.5" height="24" rx="1.8" fill="url(#gFl)" stroke="#2e3444" stroke-width="1"/><rect x="6.5" y="6.5" width="12" height="9.5" fill="#dde4ee"/><rect x="7.5" y="7.5" width="3" height="7.5" fill="#4a5268"/><rect x="6" y="21" width="15" height="9.5" fill="#eef2f8"/><rect x="6" y="27" width="15" height="3.5" fill="#6aaee0"/><path d="M14.5 6H20.5V1.2L29.8 9.3L20.5 17.4V12.6H14.5Z" fill="url(#gAr)" stroke="#4a8a18" stroke-width="0.9" stroke-linejoin="round"/></svg>
<svg style="left:121px;top:961px;" width="30" height="32" viewBox="0 0 30 32"><rect x="7.5" y="4.5" width="11" height="11" fill="#f0f3f8" stroke="#8a9ab8" stroke-width="0.8"/><rect x="1" y="14.5" width="26.5" height="14" rx="2.6" fill="url(#gPr)" stroke="#6a7a98" stroke-width="0.9"/><rect x="5" y="13.5" width="19" height="6.5" rx="2.2" fill="#4e586c"/><rect x="7" y="24" width="15" height="7" rx="1" fill="#f4f6fa" stroke="#8a98b0" stroke-width="0.8"/><rect x="8.5" y="25.5" width="12" height="3.8" fill="#5aa8e8"/><circle cx="23.5" cy="9" r="7.2" fill="url(#gQ)" stroke="#3e7a10" stroke-width="0.7"/><text x="23.5" y="12.8" font-size="10.5" font-weight="700" font-family="Liberation Sans" text-anchor="middle" fill="#22400a">?</text></svg>
<svg style="left:243px;top:961px;" width="30" height="32" viewBox="0 0 30 32"><rect x="7.5" y="4.5" width="11" height="11" fill="#f0f3f8" stroke="#8a9ab8" stroke-width="0.8"/><rect x="1" y="14.5" width="26.5" height="14" rx="2.6" fill="url(#gPr)" stroke="#6a7a98" stroke-width="0.9"/><rect x="5" y="13.5" width="19" height="6.5" rx="2.2" fill="#4e586c"/><rect x="7" y="24" width="15" height="7" rx="1" fill="#f4f6fa" stroke="#8a98b0" stroke-width="0.8"/><rect x="8.5" y="25.5" width="12" height="3.8" fill="#5aa8e8"/><circle cx="23.5" cy="9" r="7.2" fill="url(#gQ)" stroke="#3e7a10" stroke-width="0.7"/><text x="23.5" y="12.8" font-size="10.5" font-weight="700" font-family="Liberation Sans" text-anchor="middle" fill="#22400a">?</text></svg>
<svg style="left:449px;top:965px;" width="28" height="27" viewBox="0 0 28 27"><defs><linearGradient id="gX" x1="0" y1="0" x2="0" y2="1"><stop offset="0" stop-color="#f08a80"/><stop offset="0.5" stop-color="#d84a3a"/><stop offset="1" stop-color="#b02a20"/></linearGradient></defs><path d="M5 2l9 8.5l9-8.5l4 4l-8.5 8l8.5 8l-4 4l-9-8.5l-9 8.5l-4-4l8.5-8l-8.5-8z" fill="url(#gX)" stroke="#a02a20" stroke-width="0.6" stroke-linejoin="round"/></svg>
<svg style="left:922px;top:404px;" width="14" height="22" viewBox="0 0 14 22"><path d="M1 1v16l4-3.8l2.8 6.3l2.4-1l-2.7-6.2h5.5z" fill="#fff" stroke="#000" stroke-width="1"/></svg>
<div style="top:1023px;font-size:11px;line-height:11px;font-weight:700;color:#000;white-space:nowrap;left:8px;letter-spacing:0.425px;">Chào mừng: Administrator đến với phần mềm MekongSoft</div>
<div style="left:349px;top:1022px;width:1px;height:11px;background:#c8b8a8"></div>
<div style="top:1023px;font-size:11px;line-height:11px;font-weight:700;color:#000;white-space:nowrap;left:363px;letter-spacing:0.362px;">Version: 4.0.0</div>
<div style="left:452px;top:1022px;width:1px;height:11px;background:#c8b8a8"></div>
<div style="top:1023px;font-size:11px;line-height:11px;font-weight:700;color:#ff0000;white-space:nowrap;left:466px;letter-spacing:0.645px;">Ngày: 25/10/2023 2:24:13 CH</div>
<div style="left:1613px;top:1014px;width:1px;height:26px;background:repeating-linear-gradient(180deg,#b4b4b4 0 3px,transparent 3px 6px)"></div>
<div style="top:1023px;font-size:11px;line-height:11px;font-weight:700;color:#000;white-space:nowrap;left:1624px;letter-spacing:0.464px;">@2023 MekongSoft. Thông tin hỗ trợ: 0901 000 508</div>
<div style="left:1375px;top:215px;width:531px;height:727px;border:3px solid #ababab;background:#fff"></div>
<div style="top:225px;font-size:11px;line-height:11px;font-weight:700;color:#8d949c;white-space:nowrap;left:1383.5px;letter-spacing:-0.113px;">DANH SÁCH PHIẾU</div>
<svg style="left:1870px;top:226px;" width="10" height="10" viewBox="0 0 10 10"><path d="M2 1h6M3 1v5M7 1v5M1 6h8M5 6v4" stroke="#000" stroke-width="1.6" fill="none"/></svg>
<svg style="left:1893px;top:226px;" width="10" height="8" viewBox="0 0 10 8"><path d="M0 0H3.1L5 2.5L6.9 0H10L6.6 3.9L10 8H6.9L5 5.4L3.1 8H0L3.4 3.9Z" fill="#000"/></svg>
<div style="left:1378px;top:241px;width:531px;height:1px;background:repeating-linear-gradient(90deg,#c4c4c4 0 3px,transparent 3px 6px)"></div>
<div style="top:250px;font-size:14px;line-height:14px;font-weight:400;color:#000;white-space:nowrap;left:1382px;letter-spacing:0.118px;">Từ ngày</div>
<div style="top:250px;font-size:14px;line-height:14px;font-weight:400;color:#000;white-space:nowrap;left:1653px;letter-spacing:-0.117px;">Đến ngày</div>
<div style="left:1382px;top:271px;width:265px;height:22px;border:1px solid #ababab;background:#fff"></div>
<div style="top:276px;font-size:14px;line-height:14px;font-weight:400;color:#000;white-space:nowrap;left:1386px;letter-spacing:0.392px;">01/10/2023</div>
<svg style="left:1636px;top:281px;" width="8" height="5" viewBox="0 0 8 5"><path d="M0.5 0.5h7l-3.5 3.5z" fill="#000"/></svg>
<div style="left:1653px;top:271px;width:250px;height:22px;border:1px solid #ababab;background:#fff"></div>
<div style="top:276px;font-size:14px;line-height:14px;font-weight:400;color:#000;white-space:nowrap;left:1657px;letter-spacing:0.392px;">25/10/2023</div>
<svg style="left:1892px;top:281px;" width="8" height="5" viewBox="0 0 8 5"><path d="M0.5 0.5h7l-3.5 3.5z" fill="#000"/></svg>
<div style="top:305px;font-size:14px;line-height:14px;font-weight:400;color:#000;white-space:nowrap;left:1382px;letter-spacing:-0.073px;">Khách hàng</div>
<div style="left:1462px;top:299px;width:441px;height:22px;border:1px solid #ababab;background:#fff"></div>
<svg style="left:1872px;top:309px;" width="8" height="5" viewBox="0 0 8 5"><path d="M0.5 0.5h7l-3.5 3.5z" fill="#000"/></svg>
<div style="top:335px;font-size:14px;line-height:14px;font-weight:400;color:#000;white-space:nowrap;left:1382px;letter-spacing:-0.460px;">Người lập</div>
<div style="left:1462px;top:329px;width:441px;height:22px;border:1px solid #ababab;background:#fff"></div>
<svg style="left:1872px;top:339px;" width="8" height="5" viewBox="0 0 8 5"><path d="M0.5 0.5h7l-3.5 3.5z" fill="#000"/></svg>
<div style="left:1814px;top:358px;width:89px;height:22px;border:1px solid #ababab;background:#fff"></div>
<svg style="left:1815px;top:359px" width="89" height="22"><rect width="89" height="22" fill="url(#hp2)"/></svg>
<div style="top:364px;font-size:14px;line-height:14px;font-weight:700;color:#1414ff;white-space:nowrap;left:1838.5px;letter-spacing:0.162px;">Tìm kiếm</div>
<div style="left:1382px;top:386px;width:520px;height:554px;border:1px solid #ababab;background:#fff"></div>
<svg style="left:1383px;top:387px" width="521" height="22"><rect width="521" height="22" fill="url(#hp2)"/></svg>
<div style="left:1383px;top:409px;width:521px;height:1px;background:#ababab"></div>
<svg style="left:1383px;top:410px" width="21" height="27"><rect width="21" height="27" fill="url(#hp2)"/></svg>
<div style="left:1383px;top:437px;width:521px;height:1px;background:#ababab"></div>
<div style="left:1383px;top:438px;width:521px;height:1px;background:#ababab"></div>
<svg style="left:1383px;top:439px" width="21" height="139"><rect width="21" height="139" fill="url(#hp2)"/></svg>
<div style="left:1405px;top:439px;width:498px;height:27px;background:#f3f3f3"></div>
<div style="left:1496px;top:439px;width:102px;height:27px;background:linear-gradient(90deg,#ffff00 0%,#ffff30 30%,#ffffc0 100%)"></div>
<div style="left:1404px;top:387px;width:1px;height:51px;background:#ababab"></div>
<div style="left:1404px;top:439px;width:1px;height:140px;background:#ababab"></div>
<div style="left:1495px;top:387px;width:1px;height:51px;background:#d0d0d0"></div>
<div style="left:1495px;top:439px;width:1px;height:140px;background:#d6d6d6"></div>
<div style="left:1598px;top:387px;width:1px;height:51px;background:#d0d0d0"></div>
<div style="left:1598px;top:439px;width:1px;height:140px;background:#d6d6d6"></div>
<div style="left:1753px;top:387px;width:1px;height:51px;background:#d0d0d0"></div>
<div style="left:1753px;top:439px;width:1px;height:140px;background:#d6d6d6"></div>
<div style="left:1828px;top:387px;width:1px;height:51px;background:#d0d0d0"></div>
<div style="left:1828px;top:439px;width:1px;height:140px;background:#d6d6d6"></div>
<div style="left:1383px;top:466px;width:521px;height:1px;background:#d6d6d6"></div>
<div style="left:1383px;top:494px;width:521px;height:1px;background:#d6d6d6"></div>
<div style="left:1383px;top:522px;width:521px;height:1px;background:#d6d6d6"></div>
<div style="left:1383px;top:550px;width:521px;height:1px;background:#d6d6d6"></div>
<div style="left:1383px;top:578px;width:521px;height:1px;background:#d6d6d6"></div>
<div style="top:392px;font-size:12px;line-height:12px;font-weight:700;color:#000;white-space:nowrap;left:1409px;letter-spacing:0.563px;">Ngày lập</div>
<div style="top:392px;font-size:12px;line-height:12px;font-weight:700;color:#000;white-space:nowrap;left:1500px;letter-spacing:0.585px;">Mã phiếu</div>
<div style="top:392px;font-size:12px;line-height:12px;font-weight:700;color:#000;white-space:nowrap;left:1603px;letter-spacing:0.618px;">Khách hàng</div>
<div style="top:392px;font-size:12px;line-height:12px;font-weight:700;color:#000;white-space:nowrap;left:1758px;letter-spacing:0.540px;">Tổng tiền</div>
<div style="top:392px;font-size:12px;line-height:12px;font-weight:700;color:#000;white-space:nowrap;left:1833px;letter-spacing:0.574px;">Ghi chú</div>
<svg style="left:1387px;top:418px;" width="8" height="10" viewBox="0 0 8 10"><circle cx="4" cy="3" r="2.2" fill="none" stroke="#000" stroke-width="1.6"/><path d="M4 5v4" stroke="#000" stroke-width="1.6"/></svg>
<div style="left:1413px;top:422px;width:9px;height:1px;background:#555"></div>
<div style="left:1413px;top:425px;width:9px;height:1px;background:#555"></div>
<div style="left:1762px;top:422px;width:9px;height:1px;background:#555"></div>
<div style="left:1762px;top:425px;width:9px;height:1px;background:#555"></div>
<svg style="left:1500px;top:417px;" width="17" height="11" viewBox="0 0 17 11"><text x="0" y="8.5" font-size="6.5" font-family="Liberation Mono" fill="#444">A</text><rect x="5" y="0.5" width="6" height="10" fill="#109a30"/><text x="8" y="8.5" font-size="7" font-weight="700" font-family="Liberation Mono" text-anchor="middle" fill="#fff">B</text><text x="11.5" y="8.5" font-size="6.5" font-family="Liberation Mono" fill="#444">C</text></svg>
<svg style="left:1603px;top:417px;" width="17" height="11" viewBox="0 0 17 11"><text x="0" y="8.5" font-size="6.5" font-family="Liberation Mono" fill="#444">A</text><rect x="5" y="0.5" width="6" height="10" fill="#109a30"/><text x="8" y="8.5" font-size="7" font-weight="700" font-family="Liberation Mono" text-anchor="middle" fill="#fff">B</text><text x="11.5" y="8.5" font-size="6.5" font-family="Liberation Mono" fill="#444">C</text></svg>
<svg style="left:1833px;top:417px;" width="17" height="11" viewBox="0 0 17 11"><text x="0" y="8.5" font-size="6.5" font-family="Liberation Mono" fill="#444">A</text><rect x="5" y="0.5" width="6" height="10" fill="#109a30"/><text x="8" y="8.5" font-size="7" font-weight="700" font-family="Liberation Mono" text-anchor="middle" fill="#fff">B</text><text x="11.5" y="8.5" font-size="6.5" font-family="Liberation Mono" fill="#444">C</text></svg>
<svg style="left:1390px;top:447px;" width="6" height="10" viewBox="0 0 6 10"><path d="M1 1.5L5 5L1 8.5z" fill="#000"/></svg>
<div style="top:445px;font-size:14px;line-height:14px;font-weight:400;color:#000;white-space:nowrap;left:1409px;letter-spacing:0.492px;">25/10/2023</div>
<div style="top:445px;font-size:14px;line-height:14px;font-weight:700;color:#ff0000;white-space:nowrap;left:1500px;letter-spacing:0.829px;">KTH00006-...</div>
<div style="top:445px;font-size:14px;line-height:14px;font-weight:400;color:#000;white-space:nowrap;left:1603px;">Nguyễn Công Dũng</div>
<div style="top:445px;font-size:14px;line-height:14px;font-weight:400;color:#000;white-space:nowrap;right:95px;">108,712</div>
<div style="top:473px;font-size:14px;line-height:14px;font-weight:400;color:#000;white-space:nowrap;left:1409px;letter-spacing:0.492px;">25/10/2023</div>
<div style="top:473px;font-size:14px;line-height:14px;font-weight:400;color:#000;white-space:nowrap;left:1500px;letter-spacing:-0.005px;">KTH00005-2...</div>
<div style="top:473px;font-size:14px;line-height:14px;font-weight:400;color:#000;white-space:nowrap;left:1603px;">Nguyễn Thị Hạnh Phúc</div>
<div style="top:473px;font-size:14px;line-height:14px;font-weight:400;color:#000;white-space:nowrap;right:95px;">42,407</div>
<div style="top:501px;font-size:14px;line-height:14px;font-weight:400;color:#000;white-space:nowrap;left:1409px;letter-spacing:0.492px;">25/10/2023</div>
<div style="top:501px;font-size:14px;line-height:14px;font-weight:400;color:#000;white-space:nowrap;left:1500px;letter-spacing:-0.005px;">KTH00004-2...</div>
<div style="top:501px;font-size:14px;line-height:14px;font-weight:400;color:#000;white-space:nowrap;left:1603px;">Nguyễn Anh Hạnh</div>
<div style="top:501px;font-size:14px;line-height:14px;font-weight:400;color:#000;white-space:nowrap;right:95px;">19,639</div>
<div style="top:529px;font-size:14px;line-height:14px;font-weight:400;color:#000;white-space:nowrap;left:1409px;letter-spacing:0.492px;">25/10/2023</div>
<div style="top:529px;font-size:14px;line-height:14px;font-weight:400;color:#000;white-space:nowrap;left:1500px;letter-spacing:-0.005px;">KTH00003-2...</div>
<div style="top:529px;font-size:14px;line-height:14px;font-weight:400;color:#000;white-space:nowrap;left:1603px;">Nguyễn Thị Trực</div>
<div style="top:529px;font-size:14px;line-height:14px;font-weight:400;color:#000;white-space:nowrap;right:95px;">10,689</div>
<div style="top:557px;font-size:14px;line-height:14px;font-weight:400;color:#000;white-space:nowrap;left:1409px;letter-spacing:0.492px;">25/10/2023</div>
<div style="top:557px;font-size:14px;line-height:14px;font-weight:400;color:#000;white-space:nowrap;left:1500px;letter-spacing:-0.005px;">KTH00002-2...</div>
<div style="top:557px;font-size:14px;line-height:14px;font-weight:400;color:#000;white-space:nowrap;left:1603px;">Nguyễn Văn Sáng</div>
<div style="top:557px;font-size:14px;line-height:14px;font-weight:400;color:#000;white-space:nowrap;right:95px;">5,388</div>
<div style="left:1383px;top:890px;width:521px;height:1px;background:#ababab"></div>
<svg style="left:1383px;top:891px" width="521" height="33"><rect width="521" height="33" fill="url(#hp2)"/></svg>
<div style="left:1497px;top:893px;width:101px;height:29px;background:#fff"></div>
<div style="left:1497px;top:893px;width:102px;height:1px;background:repeating-linear-gradient(90deg,#c8c8c8 0 3px,transparent 3px 6px)"></div>
<div style="left:1497px;top:921px;width:102px;height:1px;background:repeating-linear-gradient(90deg,#c8c8c8 0 3px,transparent 3px 6px)"></div>
<div style="left:1497px;top:893px;width:1px;height:29px;background:repeating-linear-gradient(180deg,#c8c8c8 0 3px,transparent 3px 6px)"></div>
<div style="left:1598px;top:893px;width:1px;height:29px;background:repeating-linear-gradient(180deg,#c8c8c8 0 3px,transparent 3px 6px)"></div>
<div style="left:1755px;top:893px;width:73px;height:29px;background:#fff"></div>
<div style="left:1755px;top:893px;width:74px;height:1px;background:repeating-linear-gradient(90deg,#c8c8c8 0 3px,transparent 3px 6px)"></div>
<div style="left:1755px;top:921px;width:74px;height:1px;background:repeating-linear-gradient(90deg,#c8c8c8 0 3px,transparent 3px 6px)"></div>
<div style="left:1755px;top:893px;width:1px;height:29px;background:repeating-linear-gradient(180deg,#c8c8c8 0 3px,transparent 3px 6px)"></div>
<div style="left:1828px;top:893px;width:1px;height:29px;background:repeating-linear-gradient(180deg,#c8c8c8 0 3px,transparent 3px 6px)"></div>
<div style="top:902px;font-size:14px;line-height:14px;font-weight:700;color:#ff0000;white-space:nowrap;right:327px;letter-spacing:0.344px;">Có 5 phiếu</div>
<div style="top:902px;font-size:14px;line-height:14px;font-weight:700;color:#ff0000;white-space:nowrap;right:97px;transform:scaleX(1.1658);transform-origin:right center;">186,835</div>
<div style="left:1383px;top:924px;width:521px;height:17px;background:#fff"></div>
<div style="left:1383px;top:924px;width:18px;height:1px;background:repeating-linear-gradient(90deg,#c8c8c8 0 3px,transparent 3px 6px)"></div>
<svg style="left:1388px;top:928px;" width="6" height="9" viewBox="0 0 6 9"><path d="M5 0.5L1 4.5L5 8.5z" fill="#000"/></svg>
<div style="left:1400px;top:924px;width:373px;height:16px;border:1px solid #ababab;box-sizing:border-box;background:transparent"></div>
<svg style="left:1401px;top:925px" width="371" height="14"><rect width="371" height="14" fill="url(#hp2)"/></svg>
<svg style="left:1893px;top:928px;" width="6" height="9" viewBox="0 0 6 9"><path d="M1 0.5L5 4.5L1 8.5z" fill="#000"/></svg>
<svg style="left:12px;top:188px;" width="18" height="17" viewBox="0 0 18 17"><g transform="translate(8.8 8.6) rotate(-42)"><rect x="-9.6" y="-3.8" width="19.2" height="7.6" rx="2.2" fill="#d84a38"/><path d="M-7.4 -3.8H-2.6V3.8H-7.4A2.2 2.2 0 0 1 -9.6 1.6V-1.6A2.2 2.2 0 0 1 -7.4 -3.8Z" fill="#4a8ad0"/><rect x="-9" y="-3.2" width="18" height="2.6" rx="1.2" fill="#ffffff" opacity="0.45"/><rect x="-9.6" y="-3.8" width="19.2" height="7.6" rx="2.2" fill="none" stroke="#8a4a4a" stroke-width="0.4" opacity="0.6"/></g></svg>
<svg style="left:182px;top:188px;" width="16" height="17" viewBox="0 0 16 17"><defs><linearGradient id="gpl" x1="0" y1="0" x2="0" y2="1"><stop offset="0" stop-color="#8cd810"/><stop offset="1" stop-color="#58b410"/></linearGradient></defs><ellipse cx="8" cy="15.2" rx="6.5" ry="1.2" fill="#8a80a0" opacity="0.25"/><circle cx="7.8" cy="7.5" r="7.3" fill="url(#gpl)"/><path d="M6.8 2.5h2v4h4v2h-4v4h-2v-4h-4v-2h4z" fill="#fff"/></svg>
<svg style="left:377px;top:188px;" width="16" height="17" viewBox="0 0 16 17"><defs><linearGradient id="gpl" x1="0" y1="0" x2="0" y2="1"><stop offset="0" stop-color="#8cd810"/><stop offset="1" stop-color="#58b410"/></linearGradient></defs><ellipse cx="8" cy="15.2" rx="6.5" ry="1.2" fill="#8a80a0" opacity="0.25"/><circle cx="7.8" cy="7.5" r="7.3" fill="url(#gpl)"/><path d="M6.8 2.5h2v4h4v2h-4v4h-2v-4h-4v-2h4z" fill="#fff"/></svg>
<svg style="left:575px;top:189px;" width="17" height="16" viewBox="0 0 17 16"><rect x="0.5" y="0.5" width="12" height="12" fill="#5a6a80" stroke="#3a4a60"/><rect x="3" y="1" width="7" height="4" fill="#fff"/><rect x="3" y="7.5" width="7" height="4.5" fill="#dfe8f0"/><path d="M10.5 7.5v4h-2l4 4l4-4h-2v-4z" fill="#4cae2a" stroke="#2a7010" stroke-width="0.5"/></svg>
<svg style="left:705px;top:189px;" width="18" height="16" viewBox="0 0 18 16"><path d="M4.5 5.5h6a4.5 4.5 0 0 1 0 9h-3" fill="none" stroke="#3a6fb8" stroke-width="2.4"/><path d="M1 5.5l5-4.5v9z" fill="#3a6fb8"/></svg>
<svg style="left:845px;top:245px;" width="16" height="17" viewBox="0 0 16 17"><defs><linearGradient id="gpl" x1="0" y1="0" x2="0" y2="1"><stop offset="0" stop-color="#8cd810"/><stop offset="1" stop-color="#58b410"/></linearGradient></defs><ellipse cx="8" cy="15.2" rx="6.5" ry="1.2" fill="#8a80a0" opacity="0.25"/><circle cx="7.8" cy="7.5" r="7.3" fill="url(#gpl)"/><path d="M6.8 2.5h2v4h4v2h-4v4h-2v-4h-4v-2h4z" fill="#fff"/></svg>
<svg style="left:865px;top:246px;" width="17" height="15" viewBox="0 0 17 15"><path d="M11 1C5.6 1 2.4 3.4 1.9 6.8H6.3C6.8 4.4 8.4 2.3 11 1Z" fill="#5bb040"/><path d="M0.2 6.6H8.2L4.1 10.9Z" fill="#48a83c"/><path d="M5.4 14C10.8 14 14 11.6 14.5 8.2H10.1C9.6 10.6 8 12.7 5.4 14Z" fill="#3aa83a"/><path d="M8.4 8.4H16.4L12.3 3.8Z" fill="#48ae40"/></svg>
<svg style="left:1135px;top:333px;" width="17" height="15" viewBox="0 0 17 15"><path d="M11 1C5.6 1 2.4 3.4 1.9 6.8H6.3C6.8 4.4 8.4 2.3 11 1Z" fill="#5bb040"/><path d="M0.2 6.6H8.2L4.1 10.9Z" fill="#48a83c"/><path d="M5.4 14C10.8 14 14 11.6 14.5 8.2H10.1C9.6 10.6 8 12.7 5.4 14Z" fill="#3aa83a"/><path d="M8.4 8.4H16.4L12.3 3.8Z" fill="#48ae40"/></svg>
<svg style="left:1348px;top:333px;" width="17" height="15" viewBox="0 0 17 15"><path d="M11 1C5.6 1 2.4 3.4 1.9 6.8H6.3C6.8 4.4 8.4 2.3 11 1Z" fill="#5bb040"/><path d="M0.2 6.6H8.2L4.1 10.9Z" fill="#48a83c"/><path d="M5.4 14C10.8 14 14 11.6 14.5 8.2H10.1C9.6 10.6 8 12.7 5.4 14Z" fill="#3aa83a"/><path d="M8.4 8.4H16.4L12.3 3.8Z" fill="#48ae40"/></svg>
<svg style="left:1885px;top:304px;" width="17" height="15" viewBox="0 0 17 15"><path d="M11 1C5.6 1 2.4 3.4 1.9 6.8H6.3C6.8 4.4 8.4 2.3 11 1Z" fill="#5bb040"/><path d="M0.2 6.6H8.2L4.1 10.9Z" fill="#48a83c"/><path d="M5.4 14C10.8 14 14 11.6 14.5 8.2H10.1C9.6 10.6 8 12.7 5.4 14Z" fill="#3aa83a"/><path d="M8.4 8.4H16.4L12.3 3.8Z" fill="#48ae40"/></svg>
<svg style="left:1885px;top:334px;" width="17" height="15" viewBox="0 0 17 15"><path d="M11 1C5.6 1 2.4 3.4 1.9 6.8H6.3C6.8 4.4 8.4 2.3 11 1Z" fill="#5bb040"/><path d="M0.2 6.6H8.2L4.1 10.9Z" fill="#48a83c"/><path d="M5.4 14C10.8 14 14 11.6 14.5 8.2H10.1C9.6 10.6 8 12.7 5.4 14Z" fill="#3aa83a"/><path d="M8.4 8.4H16.4L12.3 3.8Z" fill="#48ae40"/></svg>
<svg style="left:1819px;top:362px;" width="16" height="16" viewBox="0 0 16 16"><circle cx="6" cy="6" r="4.3" fill="#fff" stroke="#222" stroke-width="2"/><path d="M9 9l5.5 5.5" stroke="#222" stroke-width="3" stroke-linecap="round"/></svg>
</body></html>
